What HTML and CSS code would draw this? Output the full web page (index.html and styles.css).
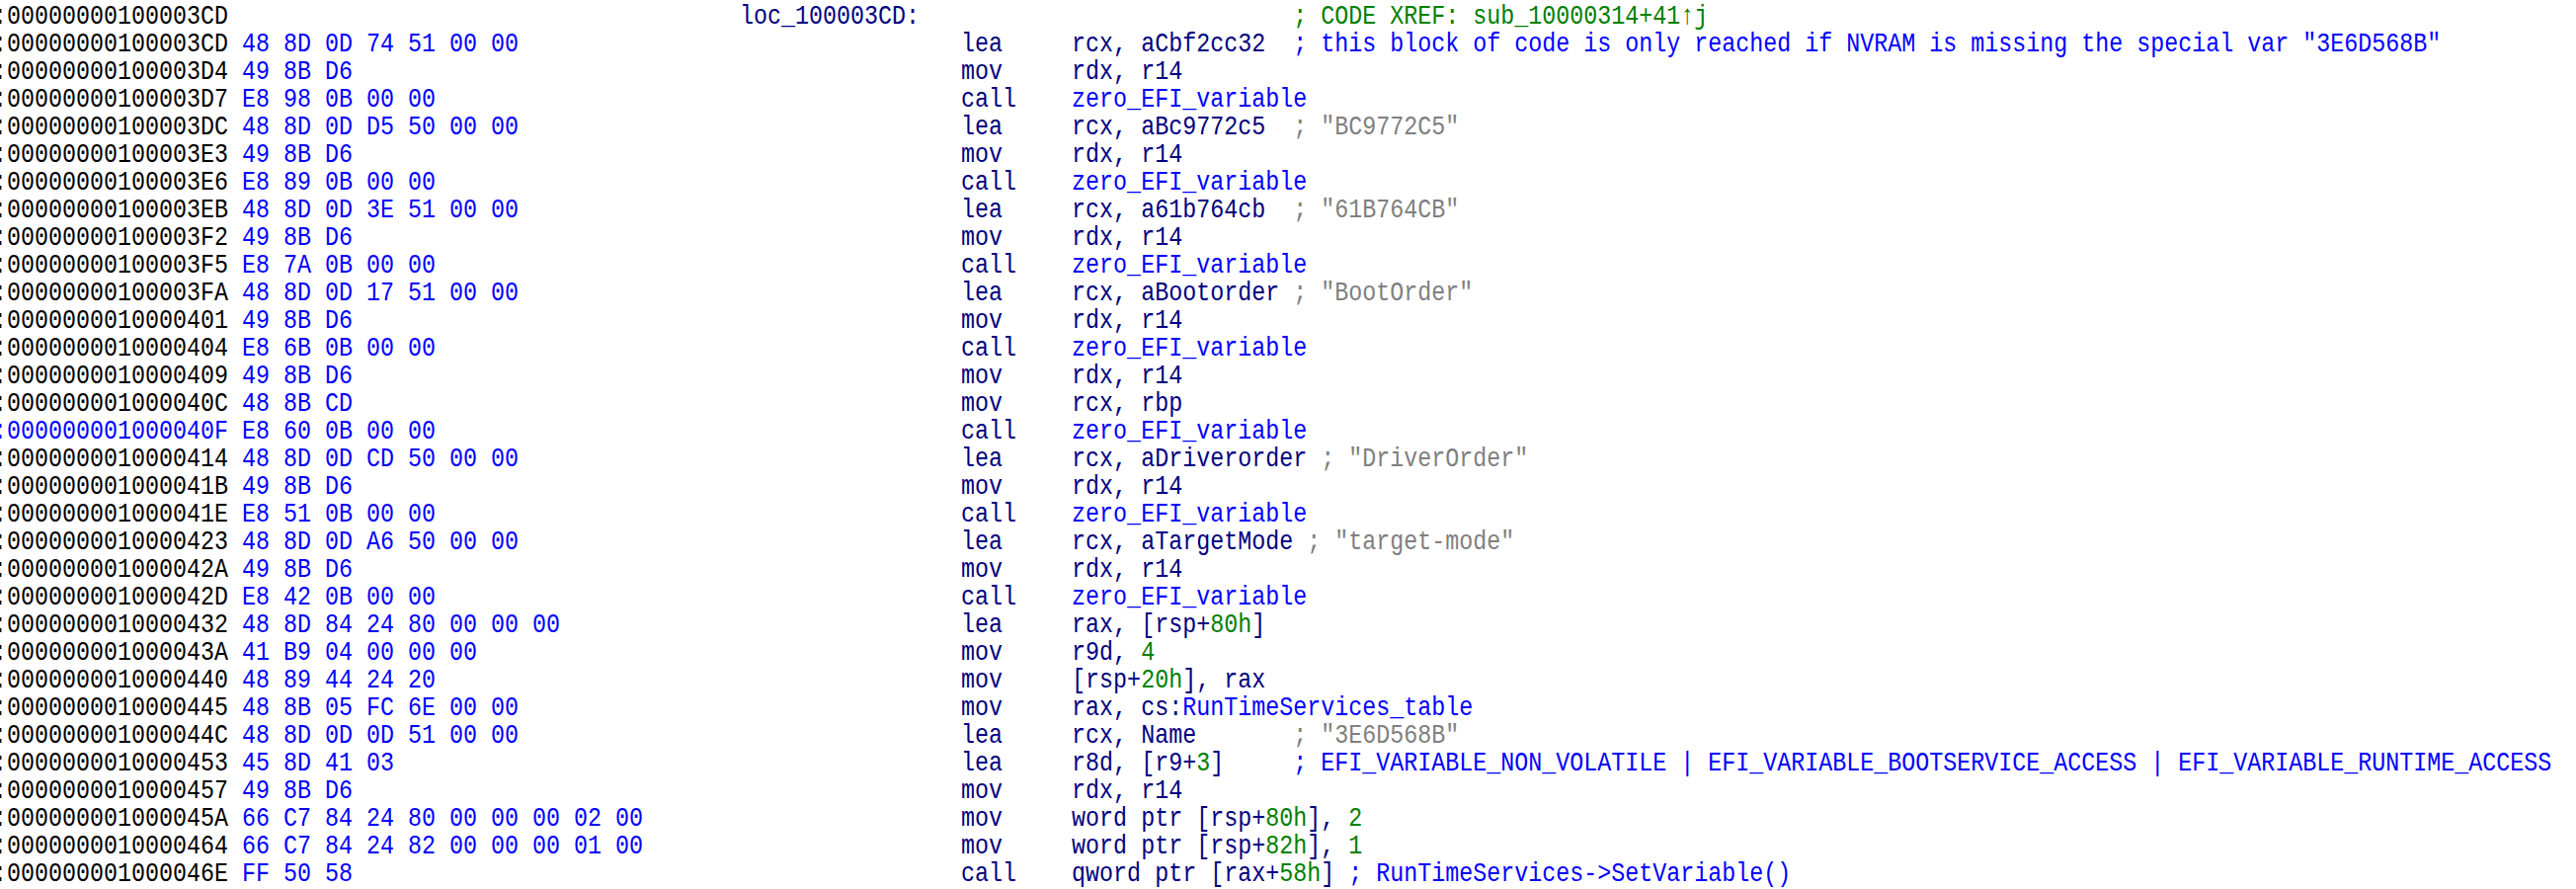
FILE: index.html
```html
<!DOCTYPE html>
<html>
<head>
<meta charset="utf-8">
<title>IDA listing</title>
<link rel="stylesheet" href="styles.css">
</head>
<body>
<div class="listing">
  <div class="row"><span class="addr">:00000000100003CD</span><span class="bytes"></span><span class="label">loc_100003CD:</span><span class="cmt xref">; CODE XREF: sub_10000314+41↑j</span></div>
  <div class="row"><span class="addr">:00000000100003CD</span><span class="bytes">48 8D 0D 74 51 00 00</span><span class="mn">lea</span><span class="ops">rcx, aCbf2cc32</span><span class="cmt">; this block of code is only reached if NVRAM is missing the special var "3E6D568B"</span></div>
  <div class="row"><span class="addr">:00000000100003D4</span><span class="bytes">49 8B D6</span><span class="mn">mov</span><span class="ops">rdx, r14</span></div>
  <div class="row"><span class="addr">:00000000100003D7</span><span class="bytes">E8 98 0B 00 00</span><span class="mn">call</span><span class="ops name">zero_EFI_variable</span></div>
  <div class="row"><span class="addr">:00000000100003DC</span><span class="bytes">48 8D 0D D5 50 00 00</span><span class="mn">lea</span><span class="ops">rcx, aBc9772c5</span><span class="cmt str">; "BC9772C5"</span></div>
  <div class="row"><span class="addr">:00000000100003E3</span><span class="bytes">49 8B D6</span><span class="mn">mov</span><span class="ops">rdx, r14</span></div>
  <div class="row"><span class="addr">:00000000100003E6</span><span class="bytes">E8 89 0B 00 00</span><span class="mn">call</span><span class="ops name">zero_EFI_variable</span></div>
  <div class="row"><span class="addr">:00000000100003EB</span><span class="bytes">48 8D 0D 3E 51 00 00</span><span class="mn">lea</span><span class="ops">rcx, a61b764cb</span><span class="cmt str">; "61B764CB"</span></div>
  <div class="row"><span class="addr">:00000000100003F2</span><span class="bytes">49 8B D6</span><span class="mn">mov</span><span class="ops">rdx, r14</span></div>
  <div class="row"><span class="addr">:00000000100003F5</span><span class="bytes">E8 7A 0B 00 00</span><span class="mn">call</span><span class="ops name">zero_EFI_variable</span></div>
  <div class="row"><span class="addr">:00000000100003FA</span><span class="bytes">48 8D 0D 17 51 00 00</span><span class="mn">lea</span><span class="ops">rcx, aBootorder</span><span class="cmt str">; "BootOrder"</span></div>
  <div class="row"><span class="addr">:0000000010000401</span><span class="bytes">49 8B D6</span><span class="mn">mov</span><span class="ops">rdx, r14</span></div>
  <div class="row"><span class="addr">:0000000010000404</span><span class="bytes">E8 6B 0B 00 00</span><span class="mn">call</span><span class="ops name">zero_EFI_variable</span></div>
  <div class="row"><span class="addr">:0000000010000409</span><span class="bytes">49 8B D6</span><span class="mn">mov</span><span class="ops">rdx, r14</span></div>
  <div class="row"><span class="addr">:000000001000040C</span><span class="bytes">48 8B CD</span><span class="mn">mov</span><span class="ops">rcx, rbp</span></div>
  <div class="row"><span class="addr current">:000000001000040F</span><span class="bytes">E8 60 0B 00 00</span><span class="mn">call</span><span class="ops name">zero_EFI_variable</span></div>
  <div class="row"><span class="addr">:0000000010000414</span><span class="bytes">48 8D 0D CD 50 00 00</span><span class="mn">lea</span><span class="ops">rcx, aDriverorder</span><span class="cmt str">; "DriverOrder"</span></div>
  <div class="row"><span class="addr">:000000001000041B</span><span class="bytes">49 8B D6</span><span class="mn">mov</span><span class="ops">rdx, r14</span></div>
  <div class="row"><span class="addr">:000000001000041E</span><span class="bytes">E8 51 0B 00 00</span><span class="mn">call</span><span class="ops name">zero_EFI_variable</span></div>
  <div class="row"><span class="addr">:0000000010000423</span><span class="bytes">48 8D 0D A6 50 00 00</span><span class="mn">lea</span><span class="ops">rcx, aTargetMode</span><span class="cmt str">; "target-mode"</span></div>
  <div class="row"><span class="addr">:000000001000042A</span><span class="bytes">49 8B D6</span><span class="mn">mov</span><span class="ops">rdx, r14</span></div>
  <div class="row"><span class="addr">:000000001000042D</span><span class="bytes">E8 42 0B 00 00</span><span class="mn">call</span><span class="ops name">zero_EFI_variable</span></div>
  <div class="row"><span class="addr">:0000000010000432</span><span class="bytes">48 8D 84 24 80 00 00 00</span><span class="mn">lea</span><span class="ops">rax, [rsp+<span class="num">80h</span>]</span></div>
  <div class="row"><span class="addr">:000000001000043A</span><span class="bytes">41 B9 04 00 00 00</span><span class="mn">mov</span><span class="ops">r9d, <span class="num">4</span></span></div>
  <div class="row"><span class="addr">:0000000010000440</span><span class="bytes">48 89 44 24 20</span><span class="mn">mov</span><span class="ops">[rsp+<span class="num">20h</span>], rax</span></div>
  <div class="row"><span class="addr">:0000000010000445</span><span class="bytes">48 8B 05 FC 6E 00 00</span><span class="mn">mov</span><span class="ops">rax, cs:<span class="name">RunTimeServices_table</span></span></div>
  <div class="row"><span class="addr">:000000001000044C</span><span class="bytes">48 8D 0D 0D 51 00 00</span><span class="mn">lea</span><span class="ops">rcx, Name</span><span class="cmt str">; "3E6D568B"</span></div>
  <div class="row"><span class="addr">:0000000010000453</span><span class="bytes">45 8D 41 03</span><span class="mn">lea</span><span class="ops">r8d, [r9+<span class="num">3</span>]</span><span class="cmt">; EFI_VARIABLE_NON_VOLATILE | EFI_VARIABLE_BOOTSERVICE_ACCESS | EFI_VARIABLE_RUNTIME_ACCESS</span></div>
  <div class="row"><span class="addr">:0000000010000457</span><span class="bytes">49 8B D6</span><span class="mn">mov</span><span class="ops">rdx, r14</span></div>
  <div class="row"><span class="addr">:000000001000045A</span><span class="bytes">66 C7 84 24 80 00 00 00 02 00</span><span class="mn">mov</span><span class="ops">word ptr [rsp+<span class="num">80h</span>], <span class="num">2</span></span></div>
  <div class="row"><span class="addr">:0000000010000464</span><span class="bytes">66 C7 84 24 82 00 00 00 01 00</span><span class="mn">mov</span><span class="ops">word ptr [rsp+<span class="num">82h</span>], <span class="num">1</span></span></div>
  <div class="row"><span class="addr">:000000001000046E</span><span class="bytes">FF 50 58</span><span class="mn">call</span><span class="ops">qword ptr [rax+<span class="num">58h</span>]</span><span class="cmt">; RunTimeServices-&gt;SetVariable()</span></div>
</div>
</body>
</html>
```

FILE: styles.css
```css
html, body {
  margin: 0;
  padding: 0;
  background: #ffffff;
  overflow: hidden;
}

.listing {
  margin-left: -7px;
  padding-top: 3px;
  font-family: "Liberation Mono", "DejaVu Sans Mono", monospace;
  font-size: 28px;
  line-height: 28px;
  color: #000080;
  transform: scaleX(0.8333);
  transform-origin: 0 0;
  width: max-content;
}

.row {
  display: flex;
  height: 28px;
  white-space: pre;
}

.row > span {
  flex-shrink: 0;
}

.addr {
  width: 18ch;
  color: #000000;
}

.addr.current {
  color: #0000ff;
}

.bytes {
  width: 36ch;
  color: #0000ff;
}

.label {
  width: 40ch;
  color: #000080;
}

.mn {
  margin-left: 16ch;
  width: 8ch;
}

.ops {
  min-width: 15ch;
  margin-right: 1ch;
}

.name {
  color: #0000ff;
}

.num {
  color: #008000;
}

.cmt {
  color: #0000ff;
}

.cmt.xref {
  color: #008000;
}

.cmt.str {
  color: #808080;
}
```
